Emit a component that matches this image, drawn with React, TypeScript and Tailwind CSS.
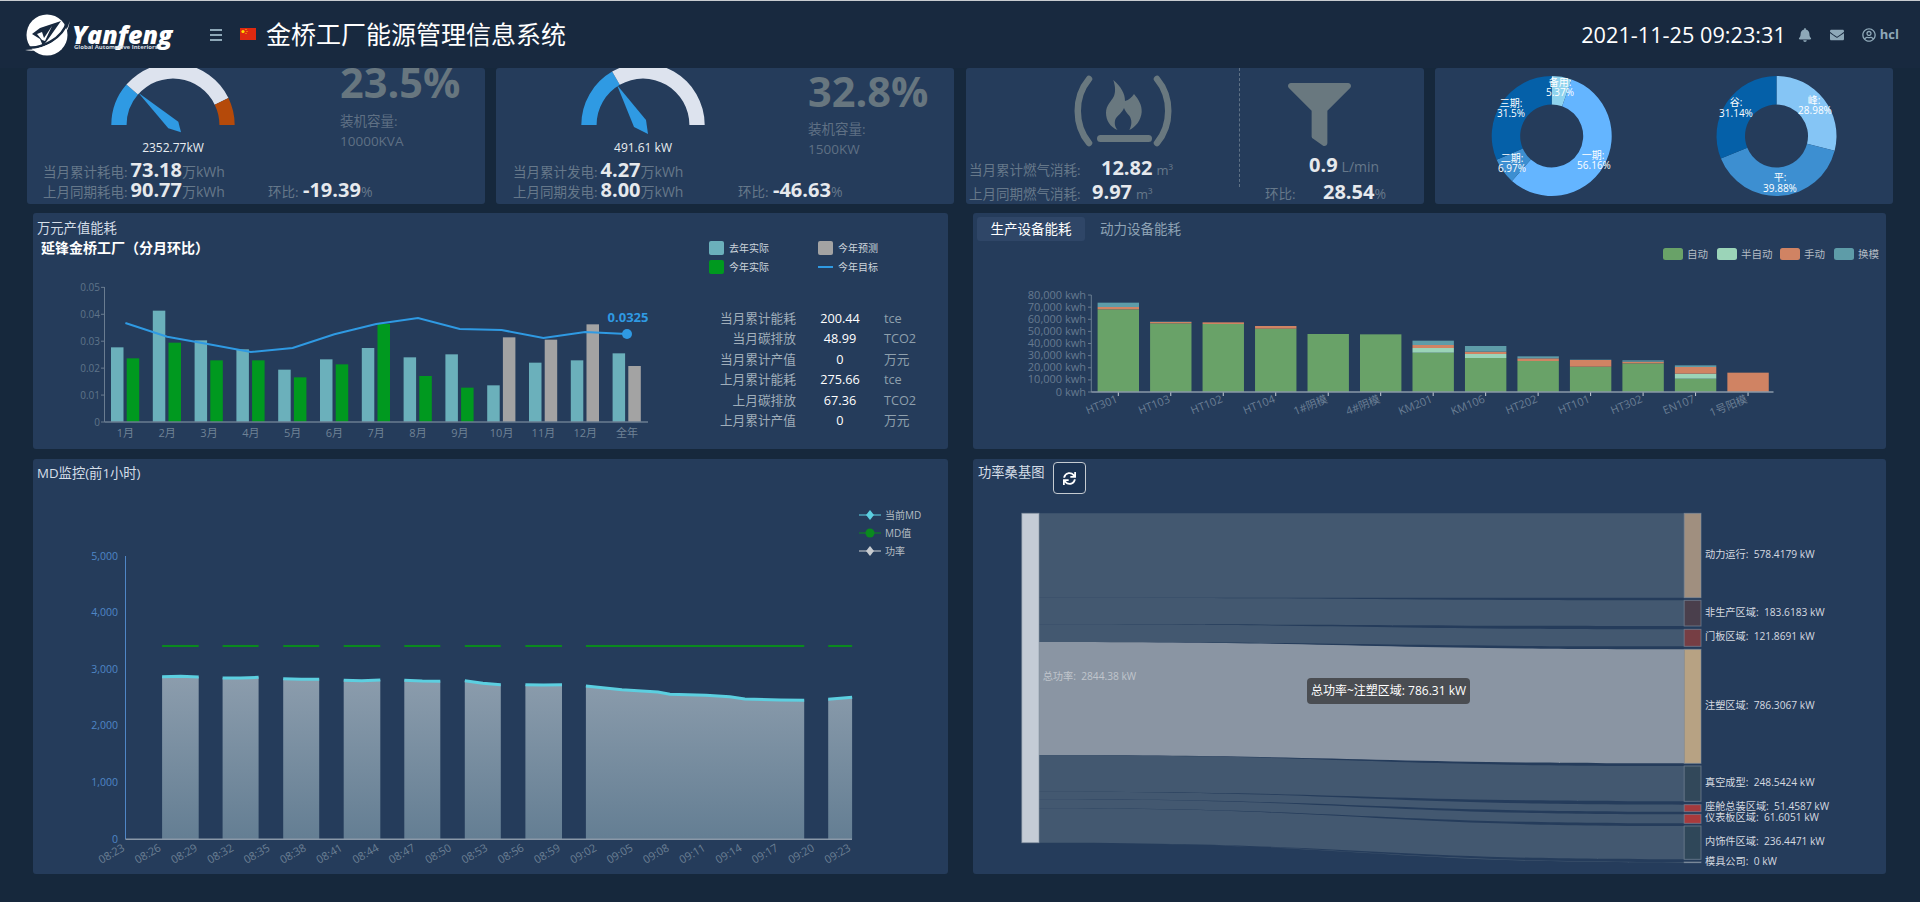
import { FaBell, FaEnvelope, FaFilter, FaRegUserCircle, FaSync } from "react-icons/fa";

const CARD = "bg-[#253c5b] rounded-[3px]";

// annular sector, angle in degrees clockwise from 12 o'clock
function sector(cx: number, cy: number, r0: number, r1: number, a0: number, a1: number) {
  const p = (r: number, a: number) => {
    const t = (a * Math.PI) / 180;
    return `${(cx + r * Math.sin(t)).toFixed(2)} ${(cy - r * Math.cos(t)).toFixed(2)}`;
  };
  const large = a1 - a0 > 180 ? 1 : 0;
  return `M${p(r1, a0)}A${r1} ${r1} 0 ${large} 1 ${p(r1, a1)}L${p(r0, a1)}A${r0} ${r0} 0 ${large} 0 ${p(r0, a0)}Z`;
}

function Logo() {
  return (
    <div className="flex items-start">
      <svg width="46" height="44" viewBox="0 0 46 44" className="mt-[13px] ml-[25px]">
        <circle cx="22" cy="21" r="20.5" fill="#fff" />
        <path d="M1 33C16 36 38 24 42 8" stroke="#18293f" strokeWidth="2.5" fill="none" />
        <path d="M0 36C18 40 44 26 44.5 7C42 24 18 36 0 36Z" fill="#fff" />
        <path d="M7 20L15 14L36 7L24 24L18 32L15 25Z" fill="#18293f" />
        <path d="M12 20L17 18L19 24L27 12L20 27L17 26Z" fill="#fff" />
      </svg>
      <div className="mt-[23px] ml-[1px] text-white">
        <div className="text-[25px] leading-[20px] font-extrabold italic">Yanfeng</div>
        <div className="text-[6px] leading-[8px] mt-[-1px] ml-[2px] font-bold text-[#d5dbe0]">Global Automotive Interiors</div>
      </div>
    </div>
  );
}

function Header() {
  return (
    <div className="h-[68px] shrink-0 bg-[#18293f] border-t border-[#c8ccd0] flex items-start relative">
      <div className="w-[210px]">
        <Logo />
      </div>
      <div className="mt-[28px] w-[12px] flex flex-col gap-[3px]">
        <div className="h-[2px] bg-[#8ea8b8]" />
        <div className="h-[2px] bg-[#8ea8b8]" />
        <div className="h-[2px] bg-[#8ea8b8]" />
      </div>
      <svg width="16" height="12" viewBox="0 0 16 12" className="mt-[27px] ml-[18px]">
        <rect width="16" height="12" fill="#de2910" />
        <circle cx="3" cy="3.5" r="1.6" fill="#ffde00" />
        <circle cx="6" cy="1.5" r="0.6" fill="#ffde00" />
        <circle cx="7" cy="3.5" r="0.6" fill="#ffde00" />
        <circle cx="6" cy="5.5" r="0.6" fill="#ffde00" />
      </svg>
      <div className="ml-[10px] mt-[16px] text-[25px] leading-[34px] text-white">金桥工厂能源管理信息系统</div>
      <div className="ml-auto mr-[21px] mt-[18px] flex items-center h-[32px]">
        <span className="text-[21.7px] text-white leading-[32px]">2021-11-25 09:23:31</span>
        <FaBell className="ml-[12px] text-[#8ea8b8]" size={14} />
        <FaEnvelope className="ml-[18px] text-[#8ea8b8]" size={14} />
        <FaRegUserCircle className="ml-[18px] text-[#8ea8b8]" size={14} />
        <span className="ml-[4px] text-[13px] font-bold text-[#8ea8b8]">hcl</span>
      </div>
    </div>
  );
}

interface GaugeCardProps {
  padClass: string;
  segments: { from: number; to: number; color: string }[];
  needle: string;
  reading: string;
  pct: string;
  pctClass: string;
  labelClass: string;
  rightClass: string;
  capacity: string;
  curLabel: string;
  curValue: string;
  prevLabel: string;
  prevValue: string;
  ratio: string;
}

function GaugeCard(props: GaugeCardProps) {
  return (
    <div className={`${CARD} h-[136px] w-[458px] overflow-hidden ${props.padClass}`}>
      <div className="flex h-[92px]">
        <div className="w-[297px] shrink-0">
          <svg width="297" height="70" viewBox="0 0 297 70" className="block">
            {props.segments.map((s) => (
              <path key={s.color} d={sector(130, 57, 46.4, 61.7, s.from, s.to)} fill={s.color} />
            ))}
            <polygon points={props.needle} fill="#2f9ae3" />
          </svg>
          <div className="w-[260px] text-center text-[12px] leading-[20px] text-[#e8ecf0]">{props.reading}</div>
        </div>
        <div className={`text-[#5f7084] ${props.rightClass}`}>
          <div className={`h-[44px] text-[41.5px] leading-[44px] font-bold text-[#67767f] ${props.pctClass}`}>{props.pct}</div>
          <div className={`text-[13.5px] leading-[20px] ${props.labelClass}`}>装机容量:</div>
          <div className="text-[13.5px] leading-[20px]">{props.capacity}</div>
        </div>
      </div>
      <div className="flex items-baseline h-[20px] text-[13.5px] leading-[20px] text-[#66788a]">
        <span>{props.curLabel}</span>
        <span className="ml-[3px] text-[20px] font-bold text-[#e6e9ed]">{props.curValue}</span>
        <span className="text-[14px]">万kWh</span>
      </div>
      <div className="flex items-baseline h-[20px] text-[13.5px] leading-[20px] text-[#66788a]">
        <span className="w-[225px] flex items-baseline">
          <span>{props.prevLabel}</span>
          <span className="ml-[3px] text-[20px] font-bold text-[#e6e9ed]">{props.prevValue}</span>
          <span className="text-[14px]">万kWh</span>
        </span>
        <span className="w-[35px]">环比:</span>
        <span className="text-[20px] font-bold text-[#e6e9ed]">{props.ratio}</span>
        <span className="text-[14px]">%</span>
      </div>
    </div>
  );
}

function GasIcon() {
  return (
    <svg width="104" height="72" viewBox="0 0 104 72" className="block ml-[106px]" fill="#69787f">
      <path d="M17 4C2 22 2 50 17 68" fill="none" stroke="#69787f" strokeWidth="6.5" strokeLinecap="round" />
      <path d="M85 4C100 22 100 50 85 68" fill="none" stroke="#69787f" strokeWidth="6.5" strokeLinecap="round" />
      <path d="M41.3 5C49 12 53 18 53 26C57 25 60 22 62 19C67 25 70 30 69.7 37C69 45 64 52 57.3 55C60 50 60 45 57.5 41C55 38 53 36 52 33C50 38 46 40 43.5 44C42 48 43 52 45.5 55C38 52 34 45 34 38C34 30 39 27 42 21C44 16 43 10 41.3 5Z" />
      <rect x="25" y="60" width="55" height="7" rx="3.5" />
    </svg>
  );
}

function GasCard() {
  const label = "text-[13.5px] leading-[20px] text-[#66788a]";
  const value = "text-[20px] leading-[20px] font-bold text-[#e6e9ed]";
  return (
    <div className={`${CARD} h-[136px] w-[458px] ml-[1px] overflow-hidden`}>
      <div className="flex h-[119px]">
        <div className="w-[274px] shrink-0 border-r border-dashed border-[#5f7286] pt-[7px]">
          <GasIcon />
          <div className="flex items-baseline pl-[3px] mt-[11px]">
            <span className={`${label} w-[132px]`}>当月累计燃气消耗:</span>
            <span className={value}>12.82</span>
            <span className="ml-[4px] text-[13px] text-[#66788a]">m³</span>
          </div>
        </div>
        <div className="pt-[15px]">
          <FaFilter className="ml-[48px] text-[#69787f]" size={63} />
          <div className="flex items-baseline ml-[69px] mt-[9px]">
            <span className={value}>0.9</span>
            <span className="ml-[4px] text-[14px] text-[#66788a]">L/min</span>
          </div>
        </div>
      </div>
      <div className="flex items-baseline -mt-[5px]">
        <div className="w-[274px] shrink-0 flex items-baseline pl-[3px]">
          <span className={`${label} w-[123px]`}>上月同期燃气消耗:</span>
          <span className={value}>9.97</span>
          <span className="ml-[4px] text-[13px] text-[#66788a]">m³</span>
        </div>
        <span className={`${label} ml-[25px] w-[58px]`}>环比:</span>
        <span className={value}>28.54</span>
        <span className="text-[14px] text-[#66788a]">%</span>
      </div>
    </div>
  );
}

function Donut({ cx, parts }: { cx: number; parts: { pct: number; color: string }[] }) {
  let start = 0;
  return (
    <>
      {parts.map((p) => {
        const from = start;
        start += p.pct * 3.6;
        return <path key={p.color} d={sector(cx, 136, 31.5, 60, from, Math.min(start, 359.99))} fill={p.color} />;
      })}
    </>
  );
}

function DonutCard() {
  const labels: [string, number, number][] = [
    ["备用:", 1560, 82], ["5.37%", 1560, 92],
    ["三期:", 1511, 103], ["31.5%", 1511, 113],
    ["二期:", 1512, 158], ["6.97%", 1512, 168],
    ["一期:", 1593, 155], ["56.16%", 1594, 165],
    ["峰:", 1814, 100], ["28.98%", 1815, 110],
    ["平:", 1780, 177], ["39.88%", 1780, 188],
    ["谷:", 1736, 102], ["31.14%", 1736, 113],
  ];
  return (
    <div className={`${CARD} h-[136px] w-[458px] overflow-hidden`}>
      <svg width="458" height="136" viewBox="1435 68 458 136" className="block">
        <Donut cx={1551.7} parts={[
          { pct: 5.37, color: "#8fd3ee" },
          { pct: 56.16, color: "#64b5ff" },
          { pct: 6.97, color: "#3d8fd1" },
          { pct: 31.5, color: "#0560a8" },
        ]} />
        <Donut cx={1776.5} parts={[
          { pct: 28.98, color: "#85c5f5" },
          { pct: 39.88, color: "#3d8fd1" },
          { pct: 31.14, color: "#0560a8" },
        ]} />
        {labels.map(([t, x, y]) => (
          <text key={t} x={x} y={y + 3.5} textAnchor="middle" fontSize="10" fill="#fff">{t}</text>
        ))}
      </svg>
    </div>
  );
}

const MONTHS = ["1月", "2月", "3月", "4月", "5月", "6月", "7月", "8月", "9月", "10月", "11月", "12月", "全年"];
const LAST_YEAR = [412, 302, 391, 418, 479, 448, 414, 442, 433, 526, 458, 451, 430];
const THIS_YEAR = [445, 398, 451, 451, 502, 463, 342, 498, 533, 382, 389, 343, 468];
const TARGET = [339, 380, 403, 426, 414, 373, 342, 324, 357, 360, 384, 366, 372];

function OutputChart() {
  const y = (v: number) => 210 + v / 3;
  const cx = (i: number) => 125.4 + i * 41.8;
  return (
    <svg width="667" height="192" viewBox="33 257 667 192" className="block">
      {["0", "0.01", "0.02", "0.03", "0.04", "0.05"].map((t, i) => (
        <g key={t}>
          <text x="100" y={422 - i * 26.93 + 3.5} textAnchor="end" fontSize="10" fill="#5f748a">{t}</text>
          <line x1="101" x2="104.5" y1={422 - i * 26.93} y2={422 - i * 26.93} stroke="#6a7c90" />
        </g>
      ))}
      <line x1="104.5" x2="104.5" y1="287" y2="422" stroke="#6a7c90" />
      {LAST_YEAR.map((v, i) => (
        <rect key={MONTHS[i]} x={cx(i) - 14.4} y={y(v)} width="12.5" height={422 - y(v)} fill="#6bb0bb" />
      ))}
      {THIS_YEAR.map((v, i) => (
        <rect key={MONTHS[i]} x={cx(i) + 1.3} y={y(v)} width="12.5" height={422 - y(v)} fill={i < 9 ? "#00991f" : "#a3a3a3"} />
      ))}
      <line x1="104.5" x2="648" y1="422" y2="422" stroke="#6a7c90" strokeWidth="1.5" />
      {MONTHS.map((m, i) => (
        <text key={m} x={cx(i)} y="437" textAnchor="middle" fontSize="11" fill="#6f8296">{m}</text>
      ))}
      <polyline points={TARGET.map((v, i) => `${cx(i)},${y(v)}`).join(" ")} fill="none" stroke="#2f9ae3" strokeWidth="2" />
      <circle cx={cx(12)} cy={y(372)} r="5" fill="#2f9ae3" />
      <text x="628" y="322" textAnchor="middle" fontSize="13" fontWeight="700" fill="#2f9ae3">0.0325</text>
    </svg>
  );
}

const OUTPUT_ROWS = [
  ["当月累计能耗", "200.44", "tce"],
  ["当月碳排放", "48.99", "TCO2"],
  ["当月累计产值", "0", "万元"],
  ["上月累计能耗", "275.66", "tce"],
  ["上月碳排放", "67.36", "TCO2"],
  ["上月累计产值", "0", "万元"],
];

function OutputCard() {
  const legend = [
    { name: "去年实际", color: "bg-[#6bb0bb]" },
    { name: "今年预测", color: "bg-[#a3a3a3]" },
    { name: "今年实际", color: "bg-[#00991f]" },
  ];
  return (
    <div className={`${CARD} w-[915px] h-[236px] flex`}>
      <div className="w-[667px] shrink-0">
        <div className="pt-[6px] pl-[4px] text-[13.3px] leading-[18px] text-[#d5dee8]">万元产值能耗</div>
        <div className="mt-[2px] pl-[8px] text-[14px] leading-[18px] font-bold text-white">延锋金桥工厂（分月环比）</div>
        <OutputChart />
      </div>
      <div className="flex-1">
        <div className="grid grid-cols-[109px_1fr] ml-[9px] mt-[28px] gap-y-[5px] text-[10px] leading-[14px] text-[#cdd5dc]">
          {legend.map((l) => (
            <div key={l.name} className="flex items-center gap-[5px]">
              <span className={`w-[15px] h-[14px] rounded-[2px] ${l.color}`} />
              {l.name}
            </div>
          ))}
          <div className="flex items-center gap-[5px]">
            <span className="w-[15px] h-[2px] bg-[#2f9ae3]" />
            今年目标
          </div>
        </div>
        <div className="mt-[34px] grid grid-cols-[96px_88px_1fr] auto-rows-[20.4px] text-[12.7px] leading-[20.4px]">
          {OUTPUT_ROWS.map((r) => (
            <div key={r[0]} className="contents">
              <span className="text-right text-[#a0aeba]">{r[0]}</span>
              <span className="text-center text-white">{r[1]}</span>
              <span className="text-[#8fa0ad]">{r[2]}</span>
            </div>
          ))}
        </div>
      </div>
    </div>
  );
}

// [name, green top, semi top, manual top, change top], tops as measured, 546 is the axis
const DEVICES: [string, number, number, number, number][] = [
  ["HT301", 298, 298, 291, 278],
  ["HT103", 340, 340, 336, 335],
  ["HT102", 342, 342, 337, 337],
  ["HT104", 356, 356, 348, 348],
  ["1#阴模", 372, 372, 372, 372],
  ["4#阴模", 373, 373, 373, 373],
  ["KM201", 428, 414, 405, 392],
  ["KM106", 444, 432, 425, 408],
  ["HT202", 453, 453, 445, 439],
  ["HT101", 470, 470, 450, 449],
  ["HT302", 460, 460, 455, 451],
  ["EN107", 506, 491, 471, 466],
  ["1号阳模", 546, 546, 488, 488],
];

function DeviceChart() {
  const y = (v: number) => 210 + v / 3;
  const legend = [
    { name: "自动", x: 1663, color: "#69a268" },
    { name: "半自动", x: 1717, color: "#9bd4b8" },
    { name: "手动", x: 1780, color: "#d08363" },
    { name: "换模", x: 1834, color: "#5e9ca8" },
  ];
  return (
    <svg width="913" height="204" viewBox="973 245 913 204" className="block">
      {legend.map((l) => (
        <g key={l.name}>
          <rect x={l.x} y="248" width="20" height="12" rx="2.5" fill={l.color} />
          <text x={l.x + 24} y="258" fontSize="10.5" fill="#b4bcc4">{l.name}</text>
        </g>
      ))}
      {Array.from({ length: 9 }).map((_, i) => (
        <g key={i}>
          <text x="1086" y={392 - i * 12.12 + 3.5} textAnchor="end" fontSize="11" fill="#667a90">
            {i === 0 ? "0 kwh" : `${i * 10},000 kwh`}
          </text>
          <line x1="1088" x2="1091.3" y1={392 - i * 12.12} y2={392 - i * 12.12} stroke="#6a7c90" />
        </g>
      ))}
      <line x1="1091.3" x2="1091.3" y1="295" y2="392" stroke="#6a7c90" />
      {DEVICES.map((d, i) => {
        const left = 1097.6 + i * 52.48;
        const seg = (top: number, bottom: number, fill: string) =>
          bottom > top && <rect x={left} y={y(top)} width="41.4" height={(bottom - top) / 3} fill={fill} />;
        const cx = left + 20.7;
        return (
          <g key={d[0]}>
            {seg(d[1], 546, "#69a268")}
            {seg(d[2], d[1], "#9bd4b8")}
            {seg(d[3], d[2], "#d08363")}
            {seg(d[4], d[3], "#5e9ca8")}
            <line x1={cx} x2={cx} y1="392" y2="396" stroke="#c4ccd4" />
            <text x={cx} y="402" textAnchor="end" fontSize="11" fill="#6a7e94" transform={`rotate(-22 ${cx} 402)`}>{d[0]}</text>
          </g>
        );
      })}
      <line x1="1091.3" x2="1773.5" y1="392" y2="392" stroke="#8a98a8" strokeWidth="1.5" />
    </svg>
  );
}

function DeviceCard() {
  return (
    <div className={`${CARD} w-[913px] h-[236px]`}>
      <div className="flex pt-[4px] pl-[4px] h-[32px] text-[13.5px] leading-[24px]">
        <div className="w-[108px] h-[24px] text-center rounded-[3px] bg-[#2f4667] text-white">生产设备能耗</div>
        <div className="ml-[15px] text-[#8ea3b5]">动力设备能耗</div>
      </div>
      <DeviceChart />
    </div>
  );
}

const mdX = (v: number) => 20 + v / 1.668;
const mdY = (v: number) => 460 + v / 3;
const MD_SEGMENTS: [number, number][][] = [
  [[237, 650], [268, 649], [298, 651]],
  [[338, 654], [368, 654], [398, 652]],
  [[439, 656], [469, 658], [499, 658]],
  [[540, 661], [570, 662], [601, 660]],
  [[641, 661], [671, 663], [701, 664]],
  [[742, 662], [772, 670], [802, 674]],
  [[843, 674], [873, 675], [904, 674]],
  [[944, 678], [1004, 689], [1064, 696], [1084, 703], [1144, 706], [1184, 710], [1209, 717], [1268, 720], [1308, 721]],
  [[1348, 718], [1388, 712]],
];
const MD_TIMES = ["08:23", "08:26", "08:29", "08:32", "08:35", "08:38", "08:41", "08:44", "08:47", "08:50", "08:53", "08:56", "08:59", "09:02", "09:05", "09:08", "09:11", "09:14", "09:17", "09:20", "09:23"];

function MdChart() {
  const legend = [
    { name: "当前MD", y: 515, color: "#5ccfe0" },
    { name: "MD值", y: 533, color: "#0a8a1e" },
    { name: "功率", y: 551, color: "#c8ccd0" },
  ];
  return (
    <svg width="915" height="387" viewBox="33 487 915 387" className="block">
      <defs>
        <linearGradient id="mdArea" gradientUnits="userSpaceOnUse" x1="0" x2="0" y1="675" y2="839">
          <stop offset="0" stopColor="#8c9dad" />
          <stop offset="1" stopColor="#647e93" />
        </linearGradient>
      </defs>
      {legend.map((l) => (
        <g key={l.name}>
          <line x1="859" x2="881" y1={l.y} y2={l.y} stroke={l.color} strokeOpacity="0.7" strokeWidth="1.5" />
          {l.name === "MD值" ? (
            <circle cx="870" cy={l.y} r="4.5" fill={l.color} />
          ) : (
            <polygon points={`870,${l.y - 5} 874,${l.y} 870,${l.y + 5} 866,${l.y}`} fill={l.color} />
          )}
          <text x="885" y={l.y + 3.5} fontSize="10" fill="#b4bcc4">{l.name}</text>
        </g>
      ))}
      {["0", "1,000", "2,000", "3,000", "4,000", "5,000"].map((t, i) => (
        <text key={t} x="118" y={839.3 - i * 56.66 + 3.5} textAnchor="end" fontSize="10.5" fill="#4f86c6">{t}</text>
      ))}
      <line x1="125.5" x2="125.5" y1="556" y2="839.3" stroke="#4f86c6" />
      {MD_SEGMENTS.map((seg) => {
        const line = seg.map(([x, v]) => `${mdX(x).toFixed(1)},${mdY(v).toFixed(1)}`).join(" ");
        const first = mdX(seg[0][0]).toFixed(1);
        const last = mdX(seg[seg.length - 1][0]).toFixed(1);
        return (
          <g key={first}>
            <polygon points={`${first},839 ${line} ${last},839`} fill="url(#mdArea)" />
            <polyline points={line} fill="none" stroke="#5ccfe0" strokeWidth="3" />
            <line x1={first} x2={last} y1="646" y2="646" stroke="#0a8a1e" strokeWidth="2" />
          </g>
        );
      })}
      <line x1="125.5" x2="852" y1="839.3" y2="839.3" stroke="#8a98a8" strokeWidth="1.5" />
      {MD_TIMES.map((t, i) => {
        const x = 125.5 + i * 36.3;
        return (
          <text key={t} x={x} y="850" textAnchor="end" fontSize="11" fill="#6b7f93" transform={`rotate(-30 ${x} 850)`}>{t}</text>
        );
      })}
    </svg>
  );
}

function MdCard() {
  return (
    <div className={`${CARD} w-[915px] h-[415px]`}>
      <div className="h-[28px] pt-[5px] pl-[4px] text-[13.3px] leading-[18px] text-[#d5dee8]">MD监控(前1小时)</div>
      <MdChart />
    </div>
  );
}

// name, value, left top, left bottom, right top, right bottom, node colour, label y
const FLOWS: [string, string, number, number, number, number, string, number][] = [
  ["动力运行", "578.4179", 160, 413, 160, 413, "#a08f7f", 284],
  ["非生产区域", "183.6183", 413, 493, 421, 498, "#4a3f4c", 456],
  ["门板区域", "121.8691", 493, 546, 508, 559, "#763e44", 530],
  ["注塑区域", "786.3067", 546, 886, 568, 910, "#b7a283", 735],
  ["真空成型", "248.5424", 886, 995, 918, 1024, "#32485a", 968],
  ["座舱总装区域", "51.4587", 995, 1018, 1034, 1055, "#a43a3d", 1040],
  ["仪表板区域", "61.6051", 1018, 1045, 1063, 1090, "#a93a3c", 1073],
  ["内饰件区域", "236.4471", 1045, 1148, 1098, 1198, "#2f4759", 1145],
  ["模具公司", "0", 1148, 1148, 1206, 1208, "#8a98a7", 1205],
];

function SankeyChart() {
  const y = (v: number) => 460 + v / 3;
  const x0 = 1039;
  const x1 = 1684.2;
  const mid = (x0 + x1) / 2;
  return (
    <svg width="913" height="374" viewBox="973 500 913 374" className="block">
      {FLOWS.map((f) => (
        <path
          key={f[0]}
          d={`M${x0} ${y(f[2])}C${mid} ${y(f[2])} ${mid} ${y(f[4])} ${x1} ${y(f[4])}L${x1} ${y(f[5])}C${mid} ${y(f[5])} ${mid} ${y(f[3])} ${x0} ${y(f[3])}Z`}
          fill={f[0] === "注塑区域" ? "#8a95a3" : "#435870"}
        />
      ))}
      <rect x="1021.8" y="513.3" width="17.2" height="329.4" fill="#c4ccd6" stroke="#8592a2" strokeOpacity="0.6" />
      {FLOWS.map((f) => (
        <g key={f[0]}>
          <rect x={x1} y={y(f[4])} width="16.8" height={(f[5] - f[4]) / 3} fill={f[6]} stroke="#8592a2" strokeOpacity="0.6" />
          <text x="1705" y={y(f[7]) + 3.5} fontSize="10.2" fill="#d5dae0" className="whitespace-pre">{`${f[0]}:  ${f[1]} kW`}</text>
        </g>
      ))}
      <text x="1042.7" y="680" fontSize="10.2" fill="#c0c5cc" className="whitespace-pre">{"总功率:  2844.38 kW"}</text>
    </svg>
  );
}

function SankeyCard() {
  return (
    <div className={`${CARD} w-[913px] h-[415px] relative`}>
      <div className="flex items-start h-[41px] pl-[5px]">
        <div className="mt-[4px] text-[13.3px] leading-[18px] text-[#d5dee8]">功率桑基图</div>
        <button type="button" className="ml-[9px] mt-[3px] w-[33px] h-[32px] rounded-[4px] border border-[#c4cad0] bg-[#1c3352] flex items-center justify-center text-white" aria-label="刷新">
          <FaSync size={13} />
        </button>
      </div>
      <SankeyChart />
      <div className="absolute left-[334px] top-[219px] h-[26px] w-[163px] rounded-[4px] bg-[#4a4d52] text-white text-[12px] leading-[26px] text-center whitespace-nowrap">
        总功率~注塑区域: 786.31 kW
      </div>
    </div>
  );
}

export default function App() {
  return (
    <div className="h-[902px] w-[1920px] overflow-hidden flex flex-col bg-[#16283c] font-['Open_Sans','Noto_Sans_CJK_SC',sans-serif]">
      <Header />
      <div className="flex gap-[11px] pl-[27px]">
        <GaugeCard
          padClass="pl-[16px]"
          segments={[
            { from: -90, to: -49, color: "#2f9ae3" },
            { from: -49, to: 64, color: "#dde3ee" },
            { from: 64, to: 90, color: "#b54a0a" },
          ]}
          needle="95.3,24.7 135.3,53.7 138,64.3 125.3,60.3"
          reading="2352.77kW"
          pct="23.5%"
          pctClass="-mt-[8px]"
          labelClass="mt-[7px]"
          rightClass=""
          capacity="10000KVA"
          curLabel="当月累计耗电:"
          curValue="73.18"
          prevLabel="上月同期耗电:"
          prevValue="90.77"
          ratio="-19.39"
        />
        <GaugeCard
          padClass="pl-[17px]"
          segments={[
            { from: -90, to: -30, color: "#2f9ae3" },
            { from: -30, to: 90, color: "#dde3ee" },
          ]}
          needle="104,17 133,52 135,66 121,59"
          reading="491.61 kW"
          pct="32.8%"
          pctClass="mt-[1px]"
          labelClass="mt-[6px]"
          rightClass="-ml-[2px]"
          capacity="1500KW"
          curLabel="当月累计发电:"
          curValue="4.27"
          prevLabel="上月同期发电:"
          prevValue="8.00"
          ratio="-46.63"
        />
        <GasCard />
        <DonutCard />
      </div>
      <div className="flex gap-[25px] pl-[33px] mt-[9px]">
        <OutputCard />
        <DeviceCard />
      </div>
      <div className="flex gap-[25px] pl-[33px] mt-[10px]">
        <MdCard />
        <SankeyCard />
      </div>
    </div>
  );
}
